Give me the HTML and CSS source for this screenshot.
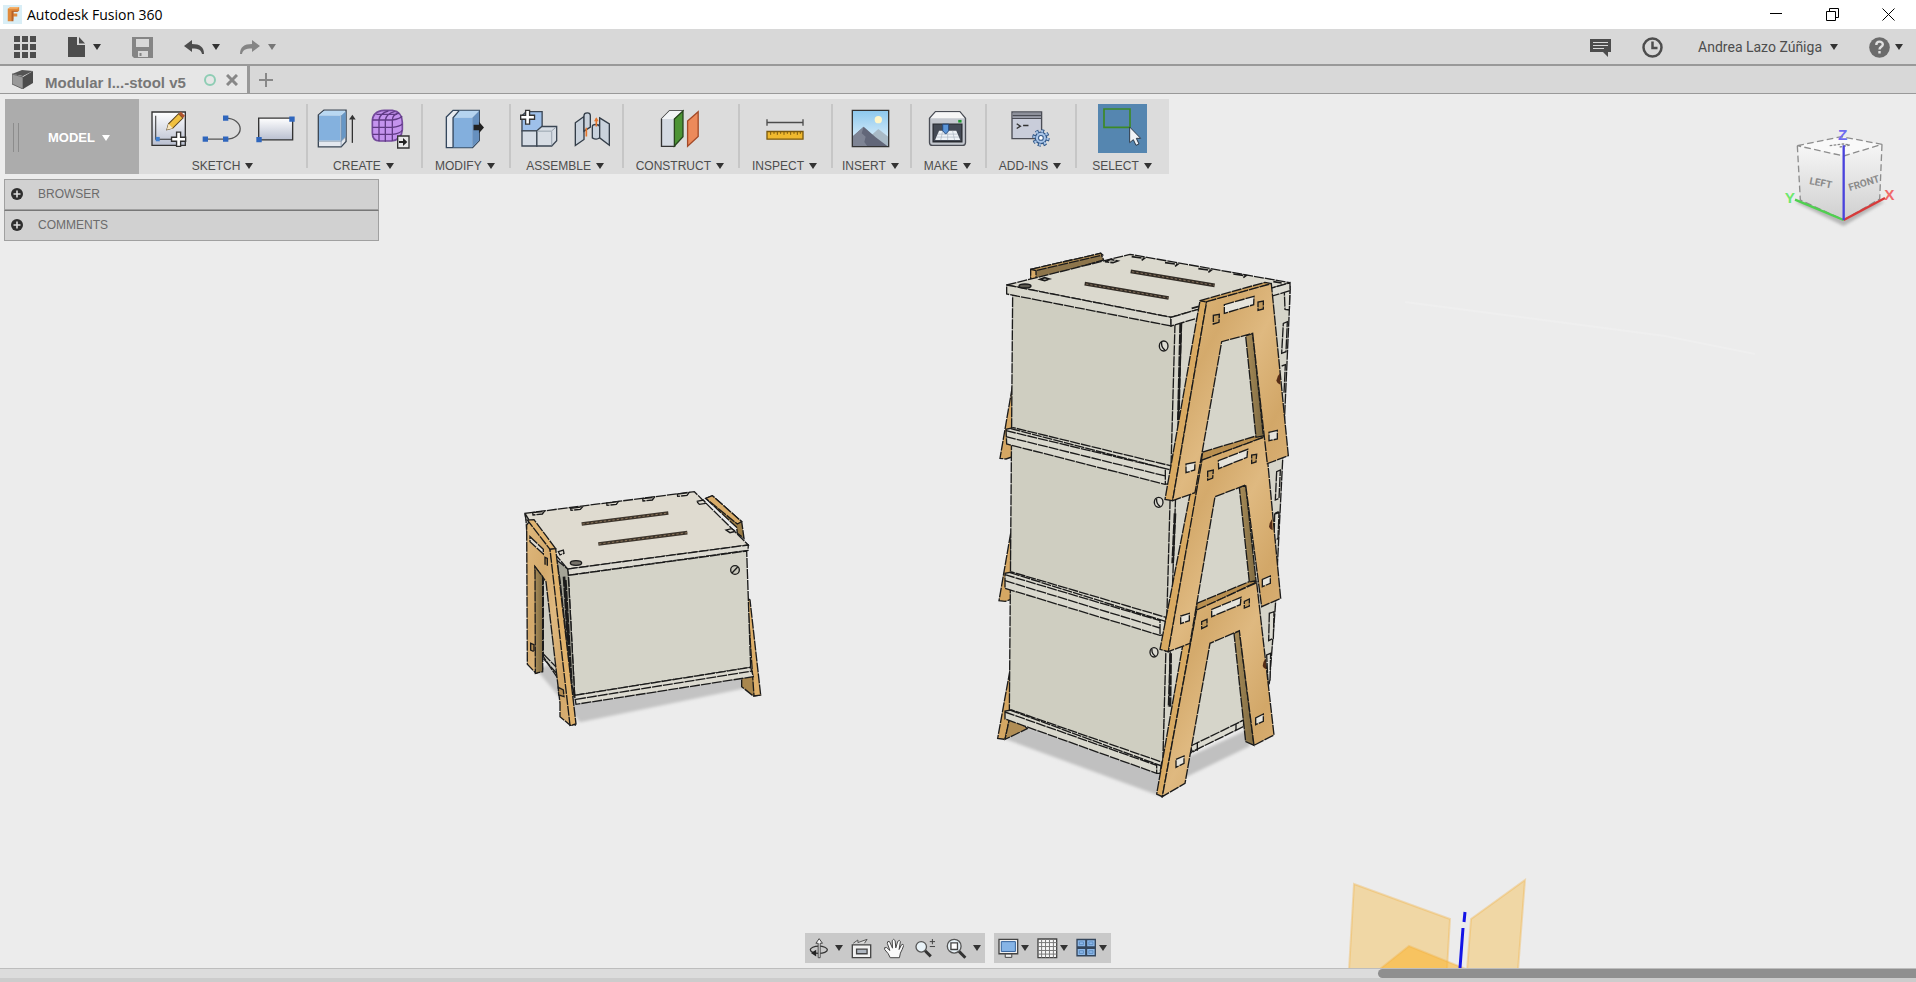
FILE: index.html
```html
<!DOCTYPE html>
<html lang="en">
<head>
    <meta charset="UTF-8">
    <meta name="viewport" content="width=device-width, initial-scale=1.0">
    <title>Autodesk Fusion 360</title>
    <link rel="stylesheet" href="styles.css">
</head>
<body>

    <!-- Title bar -->
    <header class="title-bar">
        <svg class="logo" viewBox="0 0 20 20" width="19" height="19">
            <rect width="20" height="20" fill="#d9eef6"/>
            <path d="M5 17V4l3-2h9v4l-2 1h-4v2h4v3h-4v3l-2 2z" fill="#e08a3c"/>
            <path d="M5 4l3-2h9l-2 2z" fill="#f6b26b"/>
            <path d="M9 6h8l-2 1h-4v10l-2 0z" fill="#b5622a"/>
        </svg>
        <h1>Autodesk Fusion 360</h1>
        <div class="window-controls">
            <button aria-label="Minimize"><svg viewBox="0 0 13 13" width="13" height="13"><path d="M0 5.5h12"/></svg></button>
            <button aria-label="Restore"><svg viewBox="0 0 13 13" width="13" height="13"><path d="M.5 3.5h9v9h-9zM3.5 3V.5h9v9H10"/></svg></button>
            <button aria-label="Close"><svg viewBox="0 0 13 13" width="13" height="13"><path d="M.5.5l12 12M12.5.5l-12 12"/></svg></button>
        </div>
    </header>

    <!-- Application bar -->
    <div class="app-bar">
        <button aria-label="Data panel">
            <svg viewBox="0 0 22 22" width="22" height="22" fill="#4d4d4d"><path d="M0 0h6v6H0zM8 0h6v6H8zM16 0h6v6h-6zM0 8h6v6H0zM8 8h6v6H8zM16 8h6v6h-6zM0 16h6v6H0zM8 16h6v6H8zM16 16h6v6h-6z"/></svg>
        </button>
        <button aria-label="File">
            <svg viewBox="0 0 18 20" width="18" height="20" fill="#4d4d4d"><path d="M1 0h9v8h8v12H1z"/><path d="M12 0l6 6.500h-6z"/></svg>
            <span class="caret"></span>
        </button>
        <button aria-label="Save">
            <svg viewBox="0 0 21 21" width="21" height="21"><path d="M0 0h21v21H2l-2-2z" fill="#858585"/><path d="M4 2h13v8H4zM6 14h10v6H6z" fill="#d8d8d8"/><path d="M7.500 16h2v3h-2z" fill="#858585"/></svg>
        </button>
        <div class="history">
            <button aria-label="Undo">
                <svg viewBox="0 0 20 14" width="20" height="14" fill="#4d4d4d"><path d="M0 6l8-6v4c8 0 12 3 12 10h-2c-1-4-3-5.500-10-5.500V12z"/></svg>
                <span class="caret"></span>
            </button>
            <button aria-label="Redo" class="dim">
                <svg viewBox="0 0 20 14" width="20" height="14" fill="#858585"><path d="M20 6l-8-6v4C4 4 0 7 0 14h2c1-4 3-5.500 10-5.500V12z"/></svg>
                <span class="caret"></span>
            </button>
        </div>
        <div class="account">
            <button aria-label="Comments">
                <svg viewBox="0 0 21 19" width="21" height="19"><path d="M0 1h21v13h-3v5l-5-5H0z" fill="#4d4d4d"/><path d="M3 4.500h15M3 7.500h15M3 10.500h11" stroke="#d8d8d8" stroke-width="1.200"/></svg>
            </button>
            <button aria-label="Job status">
                <svg viewBox="0 0 21 21" width="21" height="21" fill="none" stroke="#4d4d4d" stroke-width="2.500"><circle cx="10.500" cy="10.500" r="9"/><path d="M10.500 4.500V11h5"/></svg>
            </button>
            <button class="user">Andrea Lazo Zúñiga<span class="caret"></span></button>
            <button aria-label="Help">
                <svg viewBox="0 0 21 21" width="21" height="21"><circle cx="10.500" cy="10.500" r="10.300" fill="#6b6b6b"/><path d="M7.300 8c0-4.500 6.500-4.200 6.500-.6 0 2.400-3.300 2.400-3.300 5M10.500 14v2.600" fill="none" stroke="#e0e0e0" stroke-width="2.400"/></svg>
                <span class="caret"></span>
            </button>
        </div>
    </div>

    <!-- Document tabs -->
    <nav class="tab-bar">
        <div class="tab">
            <svg viewBox="0 0 21 19" width="21" height="19"><path d="M0 4l10-4 11 1-10 5z" fill="#555"/><path d="M0 4l11 3v12L0 14z" fill="#999" stroke="#666"/><path d="M11 7l10-6v12l-10 6z" fill="#4c4c4c"/></svg>
            <a href="#">Modular I...-stool v5</a>
            <span class="status"></span>
            <button aria-label="Close tab"><svg viewBox="0 0 12 12" width="12" height="12"><path d="M1 1l10 10M11 1L1 11" stroke="#888" stroke-width="3"/></svg></button>
        </div>
        <button class="new-tab" aria-label="New tab"><svg viewBox="0 0 14 14" width="14" height="14"><path d="M7 0v14M0 7h14" stroke="#888" stroke-width="2"/></svg></button>
    </nav>

    <main class="viewport">

        <!-- Model -->
        <svg class="scene" viewBox="0 94 1916 874" preserveAspectRatio="xMidYMid slice">
            <defs>
                <linearGradient id="wood" x1="0" y1="0" x2="1" y2="1">
                    <stop offset="0" stop-color="#dfb87c"/>
                    <stop offset=".3" stop-color="#d4aa6c"/>
                    <stop offset=".5" stop-color="#dfb980"/>
                    <stop offset=".75" stop-color="#d2a768"/>
                    <stop offset="1" stop-color="#dbb278"/>
                </linearGradient>
                <linearGradient id="woodDark" x1="0" y1="0" x2="1" y2="0">
                    <stop offset="0" stop-color="#a88c58"/>
                    <stop offset="1" stop-color="#7e6a42"/>
                </linearGradient>
                <filter id="soft"><feGaussianBlur stdDeviation="5"/></filter>
            </defs>

            <path d="M1405 302l260 34 90 18" fill="none" stroke="#efefef" stroke-width="2"/>

            <!-- Single stool -->
            <svg x="500" y="470" width="280" height="270" viewBox="0 0 840 810">
                <path d="M110 600L190 695 240 757 735 655 735 600 200 560z" fill="#c3c3c3" filter="url(#soft)"/>
                <g class="lines">
                    <path d="M725 625L760 610 782 675 760 678 725 650z" fill="#a9874e"/>
                    <path d="M742 385L750 390 782 675 762 678z" fill="#deb06b"/>
                    <path d="M617 85L637 77 725 155 732 205 712 190 710 172z" fill="#9b7d47"/>
                    <path d="M617 85L637 77 725 155 712 162z" fill="#d9ac69"/>
                    <path d="M130 330L200 300 222 680 170 620 130 560z" fill="#cfcec3"/>
                    <path d="M130 552L172 595M130 566L172 612"/>
                    <path d="M75 130L583 65 745 225 203 297 150 235 78 150z" fill="#dfdbd0"/>
                    <path d="M203 297L745 225 744 241 205 316z" fill="#dddbd2"/>
                    <path d="M205 316L740 243 752 592 224 676z" fill="#d4d3c8"/>
                    <path d="M170 270L203 297 205 316 224 676 214 640 180 330z" fill="#a5a497"/>
                    <path d="M224 676L752 592 760 620 228 703z" fill="#dcdad0"/>
                    <path d="M228 688L757 603"/>
                    <path d="M192 320L205 520M196 330L214 640" stroke-width="8"/>
                    <path d="M75 130L78 150 80 182 90 185 90 155z" fill="#cfcec3"/>
                </g>
                <g class="lines">
                    <path d="M80 165L90 152 150 235 226 765 210 765 180 740 180 700 138 335 105 290 128 600 108 610 82 583z" fill="url(#wood)"/>
                    <path d="M105 290L128 320 128 605 106 610z" fill="url(#woodDark)"/>
                    <path d="M82 150L102 149 167 236 150 238z" fill="#e1b572"/>
                    <path d="M150 238L167 236 228 762 210 766z" fill="#e0b26c"/>
                    <path d="M90 200L130 238 130 252 90 215z" fill="#dedad0"/>
                    <path d="M135 262L142 265 142 285 135 282zM92 520L102 524 102 545 92 540zM175 652L190 660 192 680 176 675z" fill="#b58c50"/>
                    <path d="M175 245L190 240 192 250 180 255zM590 94L610 90 618 100 598 103zM678 180L695 176 706 184 690 188z" fill="#dfdbd0"/>
                    <path d="M98 128l35-4-6 8-28 3zM212 115l35-4-6 7-28 3zM320 99l35-4-6 8-28 3zM428 86l35-4-6 8-28 3zM532 72l35-4-6 8-28 3z" fill="#dfdbd0"/>
                </g>
                <path d="M245 162L505 129M295 222L562 188" stroke="#3d352c" stroke-width="11"/>
                <path d="M247 162L505 129M297 222L562 188" stroke="#8c7458" stroke-width="3" stroke-dasharray="7 6"/>
                <ellipse cx="228" cy="279" rx="17" ry="7" fill="#77736a" stroke="#1b1b1b" stroke-width="4"/>
                <circle cx="705" cy="300" r="13" fill="#c9c8bc" stroke="#1b1b1b" stroke-width="4"/>
                <path d="M696 309l17-18" stroke="#1b1b1b" stroke-width="4"/>
            </svg>

            <!-- Stack of three stools -->
            <svg x="980" y="240" width="330" height="580" viewBox="0 0 990 1740">
                <path d="M70 1495L140 1460 540 1590 800 1470 810 1518 620 1610 540 1668z" fill="#c0c0c0" filter="url(#soft)"/>
                <g class="lines">
                    <path d="M97 440L60 655 78 657 98 650z" fill="#d5a763"/>
                    <path d="M92 880L57 1082 76 1084 92 1078z" fill="#d5a763"/>
                    <path d="M90 1290L53 1495 75 1498 92 1420z" fill="#d5a763"/>
                    <path d="M92 1420L75 1498 142 1466z" fill="#b08d55"/>
                    <path d="M152 88L362 40 371 60 165 118 152 116z" fill="#8d754b"/>
                    <path d="M152 88L362 40 368 45 168 92z" fill="#bb9558"/>
                    <path d="M152 88L168 92 168 117 152 116z" fill="#d9ac69"/>

                    <!-- box sides -->
                    <path d="M575 250L930 140 928 210 908 660 886 1100 868 1330 790 1440 640 1535 548 1580z" fill="#d6d5ca"/>
                    <path d="M632 1518L792 1440 790 1460 636 1535zM652 1510v22M768 1452v20" fill="#dcdbd1"/>
                    <path d="M913 155L930 150 928 210 915 208zM910 250L922 245 918 335 905 340zM905 378L916 374 912 460M890 695L901 690 897 775 886 780zM885 820L896 815M884 822L897 818 894 895 882 905zM868 1120L882 1115 880 1195 866 1202zM860 1245L872 1240 870 1320 864 1328z" fill="#dddcd3"/>

                    <!-- box fronts -->
                    <path d="M98 160L585 250 548 1580 88 1420z" fill="#cfcec1"/>
                    <path d="M605 245L565 1400"/>
                    <path d="M602 250L595 540M585 820L578 970M572 1240L570 1400" stroke-width="8"/>

                    <!-- lids and ledges -->
                    <path d="M80 135L450 43 930 128 573 232z" fill="#dbd9ce"/>
                    <path d="M80 135L573 232 573 258 80 162z" fill="#d8d7cc"/>
                    <path d="M573 232L930 128 930 152 573 258z" fill="#dddcd3"/>
                    <path d="M78 568L100 563 575 678 570 730 555 733 80 612z" fill="#d9d8cd"/>
                    <path d="M78 572L556 686 556 732M78 590L556 708M92 566L572 690"/>
                    <path d="M75 1000L95 996 558 1132 552 1184 540 1186 75 1045z" fill="#d9d8cd"/>
                    <path d="M75 1004L540 1142 540 1186M75 1022L540 1164M90 998L556 1144"/>
                    <path d="M75 1413L95 1410 545 1566 540 1600 530 1600 75 1437z" fill="#d9d8cd"/>
                    <path d="M75 1416L530 1576 530 1600M90 1410L545 1578"/>
                    <path d="M375 65l18-7 20 5-14 5zM180 118l14-5 14 4-14 5zM455 50l38 5-8 6M555 68l38 5-8 6M655 86l38 5-8 6M760 102l38 5-8 6M635 205l22-6M880 125l25 4" fill="#dbd9ce" stroke-width="5"/>
                </g>
                <ellipse cx="135" cy="138" rx="18" ry="6" fill="#5b584f" stroke="#1b1b1b" stroke-width="4"/>
                <path d="M452 94L704 136M314 131L566 174" stroke="#332d26" stroke-width="11"/>
                <path d="M456 95L704 136M318 132L566 174" stroke="#85705a" stroke-width="3" stroke-dasharray="7 6"/>
                <g fill="#dcdbd2" stroke="#1b1b1b" stroke-width="4">
                    <ellipse cx="551" cy="318" rx="13" ry="15"/>
                    <ellipse cx="536" cy="787" rx="13" ry="15"/>
                    <ellipse cx="522" cy="1237" rx="12" ry="14"/>
                    <path d="M545 306q-2 16 10 24M530 775q-2 16 10 24M516 1226q-2 15 10 22" fill="none"/>
                </g>

                <!-- bottom frame -->
                <g class="lines">
                    <path d="M625 1120L650 1108 547 1670 530 1662z" fill="#d9aa62"/>
                    <path d="M762 1180L778 1172 822 1516 797 1505z" fill="url(#woodDark)"/>
                    <path d="M650 1090L815 1022 830 1026 650 1112z" fill="#b98f50"/>
                    <path d="M650 1110L830 1028 882 1485 822 1516 778 1172 690 1210 615 1630 547 1670z" fill="url(#wood)"/>
                    <path d="M695 1108L783 1072 781 1094 695 1130zM588 1558L612 1548 612 1570 588 1582zM827 1434L850 1422 850 1444 827 1454z" fill="#e6e4dc"/>
                    <path d="M665 1145L681 1138 681 1158 665 1166zM793 1084L808 1077 808 1098 793 1104z" fill="#c0995c"/>
                </g>
                <!-- middle frame -->
                <g class="lines">
                    <path d="M648 670L668 658 565 1235 540 1228z" fill="#d9aa62"/>
                    <path d="M778 742L797 735 828 1022 808 1026z" fill="url(#woodDark)"/>
                    <path d="M668 636L845 583 856 590 664 662z" fill="#b98f50"/>
                    <path d="M666 660L856 590 902 1075 845 1100 797 735 705 770 630 1210 565 1235z" fill="url(#wood)"/>
                    <path d="M715 662L803 628 801 652 716 686zM602 1128L628 1120 628 1142 602 1151zM847 1018L871 1008 871 1030 847 1040z" fill="#e6e4dc"/>
                    <path d="M683 694L700 690 698 714 683 720zM815 645L830 643 828 666 815 670z" fill="#c0995c"/>
                </g>
                <!-- top frame -->
                <g class="lines">
                    <path d="M660 182L680 185 578 782 555 778z" fill="#d9aa62"/>
                    <path d="M797 288L818 280 850 588 828 592z" fill="url(#woodDark)"/>
                    <path d="M660 182L855 127 875 131 680 186z" fill="#c99d5b"/>
                    <path d="M680 185L874 131 925 647 862 671 818 280 725 305 645 758 578 782z" fill="url(#wood)"/>
                    <path d="M733 194L822 169 821 194 733 220zM618 672L645 667 644 690 618 698zM867 577L892 571 892 597 867 602z" fill="#e6e4dc"/>
                    <path d="M700 226L718 223 717 247 700 252zM834 186L850 183 850 207 834 211z" fill="#c0995c"/>
                </g>
                <g fill="#552c16">
                    <path d="M900 400q-9 8-11 22 2 8 12 12z"/>
                    <path d="M876 838q-8 10-9 22 3 8 11 10z"/>
                    <path d="M856 1256q-8 10-8 22 3 8 11 10z"/>
                </g>
            </svg>

            <!-- Origin planes -->
            <g fill="#f5b942" fill-opacity=".42" stroke="#f0b040" stroke-opacity=".35" stroke-width="2">
                <path d="M1354 884L1450 919 1447 970 1349 970z"/>
                <path d="M1525 880L1518 970 1467 970 1471 919z"/>
                <path d="M1409 946L1466 969 1380 969z" fill="#fbb632" fill-opacity=".6"/>
            </g>
            <path d="M1465 912l-1 10M1463 928l-3 40" stroke="#1414e6" stroke-width="3"/>
        </svg>

        <!-- Ribbon -->
        <div class="ribbon">
            <button class="workspace"><span class="grip"></span>MODEL<span class="caret"></span></button>

            <div class="group narrow">
                <div class="icons">
                    <svg viewBox="450 330 110 110" width="37" height="37">
                        <defs><linearGradient id="paper" x1="0" y1="0" x2="0" y2="1"><stop offset="0" stop-color="#fff"/><stop offset="1" stop-color="#b9bfd0"/></linearGradient></defs>
                        <path d="M456 336h99v99h-99z" fill="url(#paper)" stroke="#333" stroke-width="4"/>
                        <path d="M467 347v70h60" fill="none" stroke="#333" stroke-width="3"/>
                        <path d="M467 410h12v13h-12z" fill="#3f7fd0"/>
                        <path d="M500 389l5-18 30-30 13 13-30 30z" fill="#f0c040" stroke="#5a4320" stroke-width="3"/>
                        <path d="M535 341l7-6 12 12-6 7z" fill="#b0542e"/><path d="M500 389l5-18 13 13z" fill="#f7e6c0"/>
                        <path d="M529 396h12v15h15v12h-15v15h-12v-15h-15v-12h15z" fill="#fff" stroke="#333" stroke-width="4"/>
                    </svg>
                    <svg viewBox="608 330 117 110" width="39" height="37">
                        <path d="M618 417h61c60-2 56-62 0-63" fill="none" stroke="#555" stroke-width="4"/>
                        <path d="M610 409h16v16h-16zM671 409h16v16h-16zM671 346h16v16h-16z" fill="#2f66bd"/>
                    </svg>
                    <svg viewBox="771 330 116 110" width="39" height="37">
                        <path d="M779 354h101v65H779z" fill="url(#paper)" stroke="#333" stroke-width="4"/>
                        <path d="M772 410h16v16h-16zM870 349h16v16h-16z" fill="#2f66bd"/>
                    </svg>
                </div>
                <button class="label">SKETCH<span class="caret"></span></button>
            </div>

            <div class="group narrow">
                <div class="icons">
                    <svg viewBox="953 325 118 117" width="39" height="39">
                        <path d="M957 343l17-15h67v95l-15 16h-69z" fill="#e4e8ee" stroke="#3a4654" stroke-width="4"/>
                        <path d="M959 344h65v76h-65z" fill="#84b1de"/><path d="M959 343l16-13h64l-14 14z" fill="#b9d8f2"/><path d="M1026 344l14-13v77l-14 14z" fill="#6797c6"/>
                        <path d="M957 422h69l15-14M1026 343v95" fill="none" stroke="#7488a0" stroke-width="2"/>
                        <path d="M1060 427v-72" stroke="#333" stroke-width="4"/><path d="M1050 356l10-14 10 14z" fill="#333"/>
                    </svg>
                    <svg viewBox="1114 324 117 120" width="39" height="40">
                        <path d="M1118 362q0-32 36-34h24q30 4 30 36v22q-2 30-32 34h-36q-22 0-22-24z" fill="#c493ee" stroke="#744a9c" stroke-width="5"/>
                        <path d="M1118 357h60q26-4 29-12M1118 379h60q22-2 30-10M1118 400h60q22-2 30-12M1138 421v-64q2-20 28-27M1157 422v-65q4-20 28-25M1178 420v-62q0-18 20-22M1130 340h62" fill="none" stroke="#603a85" stroke-width="4"/>
                        <path d="M1194 405h34v36h-34z" fill="#e8e8e8" stroke="#333" stroke-width="4"/><path d="M1198 420h12v-9l13 12-13 12v-9h-12z" fill="#222"/>
                    </svg>
                </div>
                <button class="label">CREATE<span class="caret"></span></button>
            </div>

            <div class="group">
                <div class="icons">
                    <svg viewBox="136 54 116 119" width="39" height="40">
                        <path d="M140 78l20-20h78v90l-20 21h-78z" fill="#e7ebf0" stroke="#34475d" stroke-width="4"/>
                        <path d="M160 80l18-21h60l-22 21z" fill="#b5d4f0"/><path d="M160 80h57v88h-57z" fill="#83afdd"/><path d="M217 80l20-20v88l-20 20z" fill="#6690bf"/>
                        <path d="M160 168V80l18-21" fill="none" stroke="#34475d" stroke-width="4"/>
                        <path d="M221 101h16v-9l15 17-15 17v-9h-16z" fill="#222"/>
                    </svg>
                </div>
                <button class="label">MODIFY<span class="caret"></span></button>
            </div>

            <div class="group narrow">
                <div class="icons">
                    <svg viewBox="356 56 115 116" width="38" height="39">
                        <g stroke="#3b4653" stroke-width="4">
                            <path d="M362 75l13-12h48v46l-12 12h-49z" fill="#9ec0ea"/>
                            <path d="M362 121h45v46h-45z" fill="#d5dce5"/>
                            <path d="M407 121l15-13h45v43l-15 16h-45z" fill="#d7dde4"/>
                        </g>
                        <path d="M452 123v42M409 122h42l14-12" fill="none" stroke="#98a2ae" stroke-width="3"/>
                        <path d="M373 59h12v15h15v12h-15v15h-12V86h-15V74h15z" fill="#fff" stroke="#333" stroke-width="4"/>
                    </svg>
                    <svg viewBox="520 56 114 116" width="38" height="39">
                        <g fill="#c9d2dc" stroke="#333d48" stroke-width="4">
                            <path d="M527 97l26-19v69l-26 18z"/><path d="M553 75q0-8 10-8 9 0 9 8v35l-19 12z"/>
                            <path d="M578 108q0-6 10-6t12 6v34q-10 8-22 0z"/><path d="M600 82l29 18v64l-29-22z"/>
                        </g>
                        <path d="M560 112v26M590 84v24" stroke="#e5742a" stroke-width="5"/><path d="M583 92l7-12 7 12z" fill="#e5742a"/>
                    </svg>
                </div>
                <button class="label">ASSEMBLE<span class="caret"></span></button>
            </div>

            <div class="group">
                <div class="icons">
                    <svg viewBox="784 56 120 118" width="40" height="39">
                        <path d="M788 86l24-24h40l-24 24v83h-40z" fill="#d4dae2" stroke="#333" stroke-width="4"/>
                        <path d="M788 86l24-24h40l-26 24z" fill="#f3f5f7"/>
                        <path d="M827 86l26-24v78l-26 28z" fill="#4c9435" stroke="#28461e" stroke-width="4"/>
                        <path d="M867 92l32-28v75l-32 30z" fill="#ec8a5b" stroke="#a34a28" stroke-width="4"/>
                    </svg>
                </div>
                <button class="label">CONSTRUCT<span class="caret"></span></button>
            </div>

            <div class="group">
                <div class="icons">
                    <svg viewBox="0 0 114 80" width="38" height="27">
                        <path d="M3 22h108M3 12v20M111 12v20" stroke="#4b4b4b" stroke-width="4"/>
                        <path d="M3 49h108v23H3z" fill="#f0b92e" stroke="#7b5a10" stroke-width="4"/>
                        <path d="M14 50v9M24 50v6M34 50v9M44 50v6M54 50v9M64 50v6M74 50v9M84 50v6M94 50v9M103 50v6" stroke="#7b5a10" stroke-width="3"/>
                    </svg>
                </div>
                <button class="label">INSPECT<span class="caret"></span></button>
            </div>

            <div class="group narrow">
                <div class="icons">
                    <svg viewBox="158 55 117 117" width="39" height="39">
                        <defs><linearGradient id="sky" x1="0" y1="0" x2="0" y2="1"><stop offset="0" stop-color="#8cc8ee"/><stop offset="1" stop-color="#e9f5fc"/></linearGradient></defs>
                        <path d="M162 59h109v109H162z" fill="url(#sky)"/>
                        <path d="M212 140l28-25 31 24v29h-60z" fill="#a9bac6"/>
                        <path d="M162 138l34-30 36 32 38 28H162z" fill="#626779"/><path d="M196 108l-6 20 12 10-4 16 10 14h-46v-30z" fill="#7e8494"/>
                        <circle cx="240" cy="87" r="11" fill="#fff6c8"/>
                        <path d="M162 59h109v109H162z" fill="none" stroke="#333" stroke-width="4"/>
                    </svg>
                </div>
                <button class="label">INSERT<span class="caret"></span></button>
            </div>

            <div class="group">
                <div class="icons">
                    <svg viewBox="391 61 117 112" width="39" height="37">
                        <path d="M395 86l18-20h74l17 20v73q0 9-9 9h-91q-9 0-9-9z" fill="#c4c8cf" stroke="#4a4d55" stroke-width="4"/>
                        <path d="M398 86l16-18h72l15 18z" fill="#f6f6f6"/>
                        <path d="M406 104h87v53h-87z" fill="#444a55" stroke="#292c33" stroke-width="4"/>
                        <path d="M424 124h52l12 28h-76z" fill="#eef2f6"/><path d="M420 134h60M416 143h68M435 124l-6 28M450 124v28M465 124l6 28" stroke="#a9b3bf" stroke-width="2"/>
                        <path d="M435 104h18v20l-9 10-9-10z" fill="#5a95d8" stroke="#24497c" stroke-width="3"/>
                        <path d="M482 91h10v8h-10z" fill="#1d9a2d"/>
                    </svg>
                </div>
                <button class="label">MAKE<span class="caret"></span></button>
            </div>

            <div class="group">
                <div class="icons">
                    <svg viewBox="638 60 116 110" width="39" height="37">
                        <path d="M641 66h88v79h-88z" fill="#c9cdda" stroke="#4b4d55" stroke-width="4"/>
                        <path d="M643 68h84v15h-84z" fill="#8d909a"/><path d="M641 85h88M643 76h84" stroke="#4b4d55" stroke-width="3"/>
                        <path d="M655 101l11 7-11 7M674 106h16" fill="none" stroke="#333" stroke-width="4"/>
                        <circle cx="727" cy="143" r="21" fill="none" stroke="#2f5686" stroke-width="10" stroke-dasharray="9 7.500"/>
                        <circle cx="727" cy="143" r="17" fill="#a9c5e8" stroke="#2f5686" stroke-width="4"/>
                        <circle cx="727" cy="143" r="20" fill="none" stroke="#a9c5e8" stroke-width="7" stroke-dasharray="6 9.700"/>
                        <circle cx="727" cy="143" r="7" fill="#fff" stroke="#2f5686" stroke-width="3"/>
                    </svg>
                </div>
                <button class="label">ADD-INS<span class="caret"></span></button>
            </div>

            <div class="group">
                <div class="icons selected">
                    <svg viewBox="893 43 147 147" width="49" height="49">
                        <path d="M911 58h78v55h-78z" fill="none" stroke="#3d8a26" stroke-width="5"/>
                        <path d="M988 112v47l11-9 8 17 9-4-8-17h13z" fill="#f0f3f6" stroke="#2c3a4a" stroke-width="3"/>
                    </svg>
                </div>
                <button class="label">SELECT<span class="caret"></span></button>
            </div>
        </div>

        <!-- Side panels -->
        <div class="panels">
            <button><svg viewBox="0 0 12 12" width="12" height="12"><circle cx="6" cy="6" r="6" fill="#2e2e2e"/><path d="M6 2.500v7M2.500 6h7" stroke="#ddd" stroke-width="1.600"/></svg>BROWSER</button>
            <button><svg viewBox="0 0 12 12" width="12" height="12"><circle cx="6" cy="6" r="6" fill="#2e2e2e"/><path d="M6 2.500v7M2.500 6h7" stroke="#ddd" stroke-width="1.600"/></svg>COMMENTS</button>
        </div>

        <!-- View cube -->
        <svg class="view-cube" viewBox="730 375 342 324" width="114" height="108">
            <defs>
                <linearGradient id="cubeSide" x1="0" y1="0" x2="0" y2="1"><stop offset="0" stop-color="#f6f6f6"/><stop offset="1" stop-color="#cfcfcf"/></linearGradient>
            </defs>
            <path d="M765 605L912 678 1035 605 912 600z" fill="#b5b5b5" filter="url(#soft)"/>
            <path d="M773 437L905 410 1027 433 912 468z" fill="#f9f9f9"/>
            <path d="M773 437L912 468 912 660 782 600z" fill="url(#cubeSide)"/>
            <path d="M912 468L1027 433 1020 597 912 660z" fill="url(#cubeSide)"/>
            <path d="M773 437L905 410 1027 433 912 468zM773 437L782 600 912 660M1027 433L1020 597 912 660" fill="none" stroke="#8d8d8d" stroke-width="4" stroke-dasharray="20 10"/>
            <path d="M870 437l40-5 20 3-30 6" fill="none" stroke="#888" stroke-width="4" stroke-dasharray="8 4"/>
            <path d="M766 599L912 660" stroke="#4fd04f" stroke-width="7"/>
            <path d="M912 660L1036 594" stroke="#d83a3a" stroke-width="7"/>
            <path d="M912 660V436" stroke="#4a43dc" stroke-width="7"/>
            <text class="face" x="808" y="552" transform="rotate(11 808 552)">LEFT</text>
            <text class="face" x="930" y="573" transform="rotate(-17 930 573)">FRONT</text>
            <text class="axis z" x="895" y="421">Z</text>
            <text class="axis y" x="735" y="608">Y</text>
            <text class="axis x" x="1034" y="601">X</text>
        </svg>

        <!-- Navigation bar -->
        <div class="nav-bar">
            <div class="nav-group camera">
                <button aria-label="Orbit" class="first">
                    <svg viewBox="58 52 62 64" width="21" height="21"><ellipse cx="90" cy="88" rx="26" ry="11" fill="none" stroke="#333" stroke-width="4"/><path d="M88 112V68h-7l10-14 10 14h-7v44z" fill="#f4f4f4" stroke="#444" stroke-width="3"/><path d="M66 98l16-10v20z" fill="#222"/></svg>
                    <span class="caret"></span>
                </button>
                <button aria-label="Look at">
                    <svg viewBox="182 52 62 64" width="21" height="21"><path d="M185 73h56v39h-56z" fill="#f2f2f2" stroke="#444" stroke-width="4"/><path d="M198 86h32v14h-32z" fill="#aeb6c0" stroke="#444" stroke-width="4"/><path d="M188 68l14-10v8l28-10-8 12" fill="#ddd" stroke="#555" stroke-width="3"/></svg>
                </button>
                <button aria-label="Pan">
                    <svg viewBox="278 52 64 64" width="21" height="21"><path d="M300 112q-4-12-17-25-3-8 6-6l10 9-8-22q0-8 7-5l9 20-1-23q4-8 9 0l2 22 6-20q6-6 8 1l-4 24 7-14q6-5 7 2-5 14-10 23l-3 14z" fill="#fafafa" stroke="#444" stroke-width="3"/></svg>
                </button>
                <button aria-label="Zoom">
                    <svg viewBox="376 52 64 64" width="21" height="21"><path d="M406 90l18 18" stroke="#333" stroke-width="9"/><circle cx="395" cy="79" r="16" fill="#e9f3f8" stroke="#555" stroke-width="4"/><path d="M429 55v16M421 63h16M421 78h16" stroke="#444" stroke-width="3"/></svg>
                </button>
                <button aria-label="Fit" class="last">
                    <svg viewBox="473 52 64 64" width="21" height="21"><path d="M512 92l20 20" stroke="#333" stroke-width="9"/><circle cx="498" cy="77" r="21" fill="#e9f3f8" stroke="#555" stroke-width="4"/><path d="M488 67h20v20h-20z" fill="#fff" stroke="#444" stroke-width="4"/></svg>
                    <span class="caret"></span>
                </button>
            </div>
            <div class="nav-group display">
                <button aria-label="Display settings">
                    <svg viewBox="628 52 64 64" width="21" height="21"><path d="M631 56h57v44h-57z" fill="#f0f0f0" stroke="#444" stroke-width="4"/><path d="M638 63h43v30h-43z" fill="#86b4e6" stroke="#34639c" stroke-width="3"/><path d="M650 101h20v10h-20z" fill="#f0f0f0" stroke="#444" stroke-width="3"/></svg>
                    <span class="caret"></span>
                </button>
                <button aria-label="Grid and snaps">
                    <svg viewBox="743 52 64 64" width="21" height="21"><path d="M746 55h57v57h-57z" fill="#f7f7f7" stroke="#444" stroke-width="4"/><path d="M757 55v57M769 55v57M781 55v57M793 55v57M746 66h57M746 78h57M746 90h57M746 101h57" stroke="#777" stroke-width="3"/></svg>
                    <span class="caret"></span>
                </button>
                <button aria-label="Viewports">
                    <svg viewBox="859 54 62 58" width="21" height="20"><path d="M862 58h26v22h-26zM890 58h26v22h-26zM862 84h26v22h-26zM890 84h26v22h-26z" fill="#8db8e8" stroke="#34465c" stroke-width="4"/><path d="M869 65h12v8h-12zM897 65h12v8h-12zM869 91h12v8h-12zM897 91h12v8h-12z" fill="none" stroke="#4f7fb5" stroke-width="2"/></svg>
                    <span class="caret"></span>
                </button>
            </div>
        </div>
    </main>

    <!-- Timeline -->
    <footer class="timeline"><div class="thumb"></div></footer>

</body>
</html>
```
FILE: styles.css
```css
* {
    box-sizing: border-box;
}

body {
    margin: 0;
    height: 100vh;
    display: flex;
    flex-direction: column;
    overflow: hidden;
    font-family: "Liberation Sans", Arial, sans-serif;
    font-size: 12px;
    color: #4d4d4d;
    background-color: #ececec;
}

button {
    display: flex;
    align-items: center;
    padding: 0;
    border: none;
    background: none;
    font: inherit;
    color: inherit;
    cursor: pointer;
}

svg {
    display: block;
    flex-shrink: 0;
}

.caret {
    border: 4px solid transparent;
    border-top: 6px solid #333;
    border-bottom: 0;
}

.dim .caret {
    border-top-color: #777;
}

/* Title bar */
.title-bar {
    height: 29px;
    flex-shrink: 0;
    display: flex;
    align-items: center;
    padding-left: 3px;
    background-color: #fff;
}

.title-bar h1 {
    margin: 0 0 0 5px;
    font: 14px/20px "Open Sans", sans-serif;
    color: #000;
}

.window-controls {
    display: flex;
    margin-left: auto;
}

.window-controls button {
    width: 56px;
    height: 28px;
    justify-content: center;
}

.window-controls path {
    fill: none;
    stroke: #000;
}

/* Application bar */
.app-bar {
    height: 37px;
    flex-shrink: 0;
    display: flex;
    align-items: center;
    gap: 31px;
    padding: 1px 13px 0 14px;
    background-color: #d8d8d8;
    border-bottom: 2px solid #999;
}

.app-bar button {
    gap: 8px;
}

.history {
    display: flex;
    gap: 20px;
}

.account {
    display: flex;
    align-items: center;
    gap: 31px;
    margin-left: auto;
}

.account .user {
    padding-left: 4px;
    font-family: Roboto, sans-serif;
    font-size: 14px;
}

.account button:last-child {
    gap: 5px;
}

/* Tabs */
.tab-bar {
    height: 28px;
    flex-shrink: 0;
    display: flex;
    background-color: #d8d8d8;
    border-bottom: 1px solid #999;
}

.tab {
    display: flex;
    align-items: center;
    width: 250px;
    padding: 0 9px 0 12px;
    background-color: #e6e6e6;
    border-right: 3px solid #999;
}

.tab a {
    margin-left: 12px;
    padding-top: 6px;
    font-size: 15px;
    font-weight: bold;
    color: #777;
    text-decoration: none;
}

.status {
    width: 12px;
    height: 12px;
    margin: 0 10px 0 auto;
    border: 2px solid #8ecdb4;
    border-radius: 50%;
}

.new-tab {
    margin-left: 9px;
}

/* Viewport */
.viewport {
    position: relative;
    flex: 1;
    min-height: 0;
    padding: 5px 4px;
}

.scene {
    position: absolute;
    inset: 0;
    width: 100%;
    height: 100%;
}

.lines {
    fill: none;
    stroke: #1b1b1b;
    stroke-width: 4;
    stroke-dasharray: 30 3;
}

/* Ribbon */
.ribbon {
    position: relative;
    display: flex;
    width: max-content;
    height: 75px;
    margin-left: 1px;
    background-color: #dcdcdc;
}

.workspace {
    width: 134px;
    gap: 7px;
    padding: 2px 0 0 8px;
    background-color: #acacac;
    font-size: 13px;
    font-weight: bold;
    color: #fff;
}

.workspace .caret {
    border-top-color: #fff;
}

.grip {
    width: 6px;
    height: 29px;
    margin-right: 22px;
    border: solid #8c8c8c;
    border-width: 0 1px;
}

.group {
    position: relative;
    display: flex;
    flex-direction: column;
    align-items: center;
    padding: 5px 14px 0;
}

.narrow {
    padding: 5px 11px 0;
}

.group + .group::before {
    content: "";
    position: absolute;
    left: 0;
    top: 5px;
    bottom: 6px;
    width: 2px;
    background-color: #c6c6c6;
}

.group:last-child {
    padding: 5px 17px 0;
}

.icons {
    display: flex;
    align-items: center;
    gap: 15px;
    height: 49px;
    margin-bottom: 5px;
}

.selected {
    background-color: #5586b0;
}

.label {
    gap: 5px;
    line-height: 16px;
}

/* Panels */
.panels {
    position: relative;
    width: 375px;
    margin-top: 5px;
}

.panels button {
    width: 100%;
    height: 31px;
    gap: 15px;
    padding: 0 0 1px 6px;
    border: 1px solid #a0a0a0;
    background-color: #d1d1d1;
    color: #6b6b6b;
}

.panels button + button {
    border-top-color: #777;
}

/* View cube */
.view-cube {
    position: absolute;
    top: 31px;
    right: 19px;
}

.face {
    font-family: Roboto, sans-serif;
    font-size: 30px;
    font-weight: bold;
    fill: #8a8a8a;
}

.axis {
    font-size: 46px;
    font-weight: bold;
}

.x {
    fill: #f06a6a;
}

.y {
    fill: #6ee86e;
}

.z {
    fill: #6f6cf0;
}

/* Navigation bar */
.nav-bar {
    position: absolute;
    left: 0;
    right: 0;
    bottom: 5px;
    display: flex;
    justify-content: center;
    gap: 9px;
}

.nav-group {
    display: flex;
    height: 30px;
    background-color: #c9c9c9;
}

.nav-group button {
    width: 32px;
    justify-content: center;
    gap: 6px;
}

.nav-group .first,
.display button {
    width: 39px;
}

.camera {
    padding-left: 1px;
}

.nav-group .last {
    width: 44px;
}

.display button {
    gap: 2px;
}

/* Timeline */
.timeline {
    height: 14px;
    flex-shrink: 0;
    background-color: #dcdcdc;
    border-top: 1px solid #bdbdbd;
    border-bottom: 4px solid #ccc;
}

.thumb {
    height: 9px;
    margin-left: 71.9%;
    background-color: #8f8f8f;
    border-radius: 5px 0 0 5px;
}
```
